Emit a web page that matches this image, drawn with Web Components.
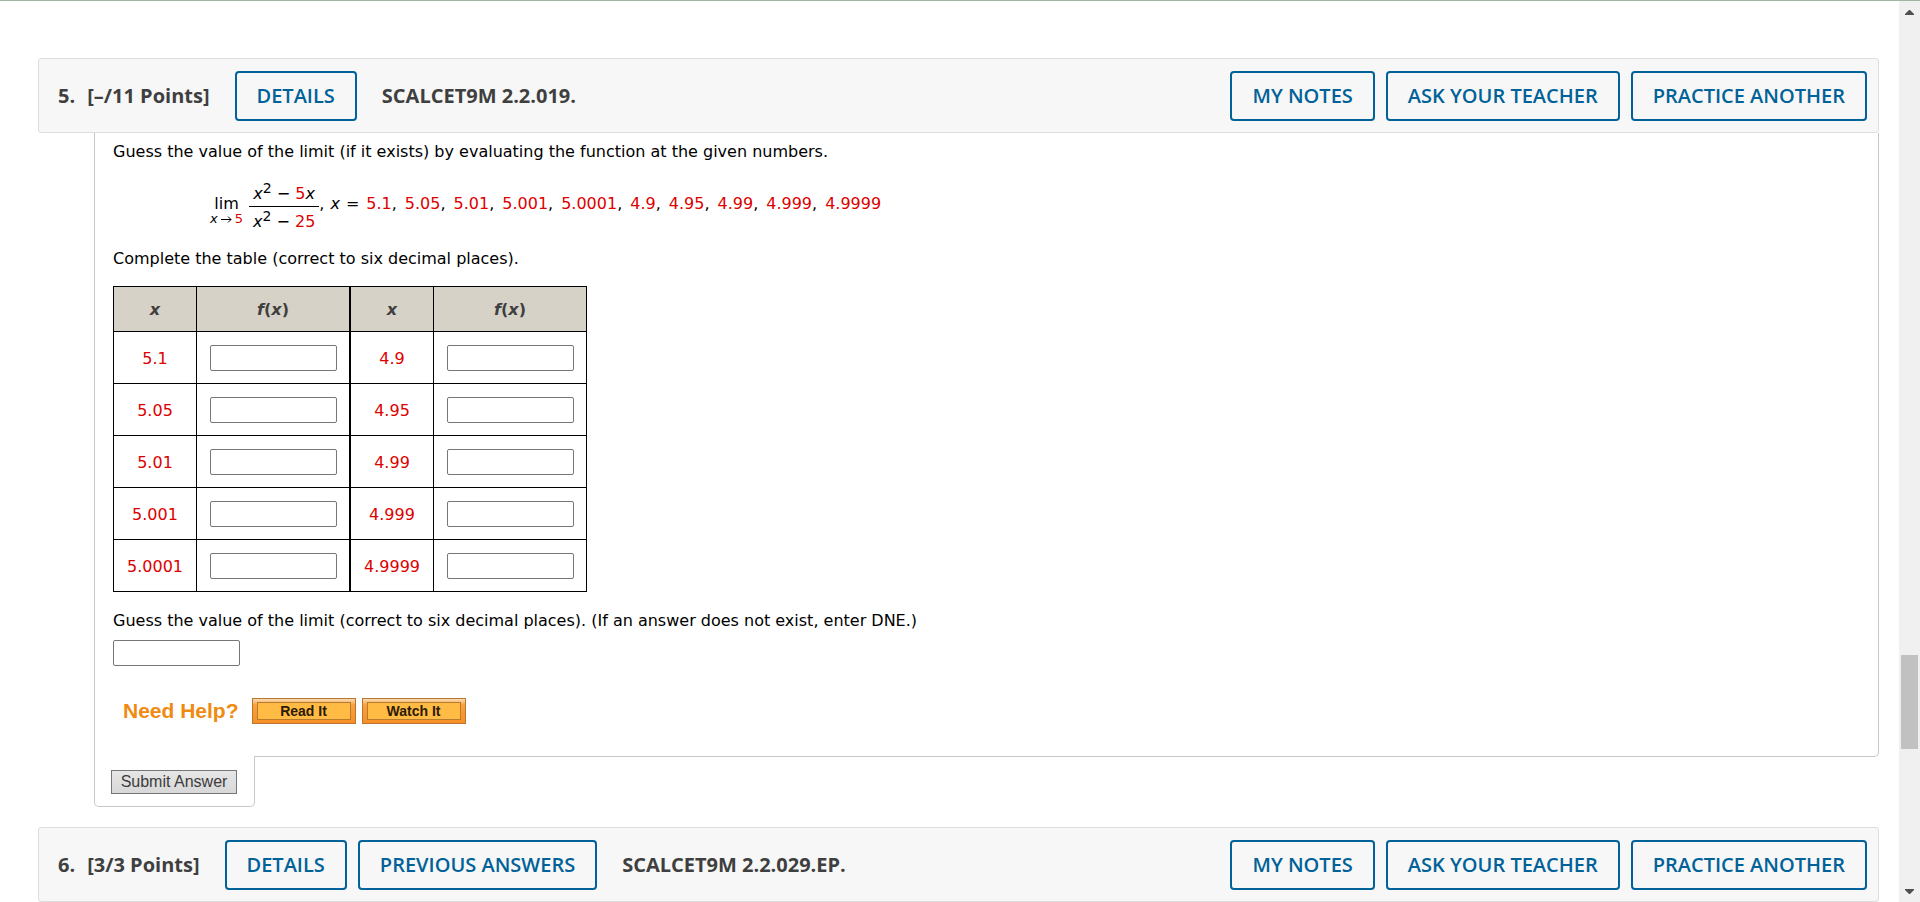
<!DOCTYPE html>
<html lang="en">
<head>
<meta charset="utf-8">
<title>Homework: Limits</title>
<style>
  html, body { margin: 0; height: 100%; }
  body { font-family: "DejaVu Sans", Verdana, sans-serif; font-size: 16px; line-height: 24px; color: #000; background: #fff; overflow: hidden; }
</style>
</head>
<body>
<assignment-page>
  <question-bar number="5." points="[–/11 Points]" name="SCALCET9M 2.2.019.">
    <outline-button slot="actions">DETAILS</outline-button>
  </question-bar>
  <question-body>
    <p>Guess the value of the limit (if it exists) by evaluating the function at the given numbers.</p>
    <limit-expression values="5.1 5.05 5.01 5.001 5.0001 4.9 4.95 4.99 4.999 4.9999"></limit-expression>
    <p>Complete the table (correct to six decimal places).</p>
    <value-table left="5.1 5.05 5.01 5.001 5.0001" right="4.9 4.95 4.99 4.999 4.9999"></value-table>
    <limit-answer>Guess the value of the limit (correct to six decimal places). (If an answer does not exist, enter DNE.)</limit-answer>
    <need-help></need-help>
  </question-body>
  <question-bar number="6." points="[3/3 Points]" name="SCALCET9M 2.2.029.EP.">
    <outline-button slot="actions">DETAILS</outline-button>
    <outline-button slot="actions">PREVIOUS ANSWERS</outline-button>
  </question-bar>
</assignment-page>

<script>
const define = (name, render) => customElements.define(name, class extends HTMLElement {
  connectedCallback() {
    if (this.shadowRoot) return;
    this.attachShadow({ mode: 'open' }).innerHTML = render(this);
  }
});

define('assignment-page', () => `
  <style>
    :host { display: grid; grid-template-columns: 1fr 21px; height: 100vh; box-sizing: border-box; border-top: 1px solid #a0b5a0; overflow: hidden; }
    main { padding: 57px 20px 0 38px; min-width: 0; }
  </style>
  <main><slot></slot></main>
  <page-scrollbar></page-scrollbar>`);

define('page-scrollbar', () => `
  <style>
    :host { display: grid; grid-template-rows: 20px 634fr 94px 133fr 20px; background: #f0f0f0; justify-items: center; }
    .thumb { grid-row: 3; width: 17px; background: #c1c1c1; }
    svg { display: block; width: 21px; height: 20px; fill: #505050; }
    .down { grid-row: 5; }
  </style>
  <svg viewBox="0 0 21 20" aria-hidden="true"><path d="M6 14h9v-1l-4-4h-1l-4 4z"/></svg>
  <div class="thumb"></div>
  <svg class="down" viewBox="0 0 21 20" aria-hidden="true"><path d="M6 7h9v1l-4 4h-1l-4-4z"/></svg>`);

define('outline-button', () => `
  <style>
    :host { display: block; }
    button { display: block; box-sizing: border-box; height: 50px; padding: 0 20px; border: 2px solid #006298; border-radius: 4px; background: transparent; color: #006298; font: 600 20px/24px "Open Sans", sans-serif; white-space: nowrap; }
  </style>
  <button type="button"><slot></slot></button>`);

define('question-bar', el => `
  <style>
    :host { display: flex; align-items: center; box-sizing: border-box; min-height: 75px; padding: 0 11px 0 19px; border: 1px solid #dedede; border-radius: 3px; background: #f7f7f7; color: #3f3f3f; font: 700 20px/24px "Open Sans", sans-serif; white-space: nowrap; }
    h2 { display: flex; gap: 12px; margin: 0; font: inherit; }
    .group { display: flex; gap: 11px; }
    .own { margin: 0 25px; }
    .common { margin-left: auto; }
  </style>
  <h2><span>${el.getAttribute('number')}</span><span>${el.getAttribute('points')}</span></h2>
  <div class="group own"><slot name="actions"></slot></div>
  <span>${el.getAttribute('name')}</span>
  <div class="group common">
    <outline-button>MY NOTES</outline-button>
    <outline-button>ASK YOUR TEACHER</outline-button>
    <outline-button>PRACTICE ANOTHER</outline-button>
  </div>`);

define('question-body', () => `
  <style>
    :host { display: block; margin: 0 0 20px 56px; }
    section { box-sizing: border-box; padding: 7px 18px 32px; border: solid #c8c8c8; border-width: 0 1px 1px; border-radius: 0 0 5px 0; }
    ::slotted(p) { margin: 0; }
    .tab { box-sizing: border-box; width: 161px; margin-top: -1px; padding: 14px 16px 12px; border: solid #c8c8c8; border-width: 0 1px 1px; border-radius: 0 0 5px 5px; background: #fff; position: relative; }
    button { display: block; box-sizing: border-box; width: 126px; height: 24px; padding: 0; border: 1px solid #767676; background: linear-gradient(#e6e6e6, #d8d8d8); color: #3c3c3c; font: 16px/22px "Liberation Sans", Arial, sans-serif; white-space: nowrap; }
  </style>
  <section><slot></slot></section>
  <div class="tab"><button type="submit">Submit Answer</button></div>`);

define('limit-expression', el => `
  <style>
    :host { display: flex; align-items: center; margin: 17px 0 16px 97px; height: 50px; white-space: nowrap; }
    .red { color: #d00; }
    .lim { display: grid; justify-items: center; margin-right: 6px; padding-top: 10px; }
    .under { display: flex; align-items: center; gap: 2px; font-size: 13px; line-height: 14px; }
    .lim b { font-weight: 400; line-height: 16px; }
    svg { width: 13px; height: 9px; fill: none; stroke: #000; }
    .frac { display: grid; padding-top: 3px; text-align: center; }
    .frac > span { padding: 0 4px; line-height: 24px; }
    .frac > span:first-child { border-bottom: 1px solid #000; }
    .frac > span:last-child { padding-top: 3px; }
    sup { font-size: 14px; line-height: 1px; vertical-align: 6px; }
    .lead, .list { display: flex; padding-bottom: 4px; }
    .lead { gap: 6px; margin-right: 7px; }
    .list { gap: 8px; }
  </style>
  <span class="lim"><b>lim</b><span class="under"><i>x</i><svg viewBox="0 0 13 9" role="img" aria-label="approaches"><path d="M1 4.500h10M8 1.500l3 3-3 3"/></svg><span class="red">5</span></span></span>
  <span class="frac"><span><i>x</i><sup>2</sup> − <span class="red">5</span><i>x</i></span><span><i>x</i><sup>2</sup> − <span class="red">25</span></span></span>
  <span class="lead"><span>,</span><i>x</i><span>=</span></span>
  <span class="list">${el.getAttribute('values').split(' ').map((v, i, all) => `<span><span class="red">${v}</span>${i < all.length - 1 ? ',' : ''}</span>`).join('')}</span>`);

define('value-table', el => {
  const right = el.getAttribute('right').split(' ');
  const cell = v => `<td>${v}</td><td><input type="text" aria-label="f(${v})"></td>`;
  return `
  <style>
    :host { display: block; margin: 15px 0 17px; }
    table { border-spacing: 0; border: solid #000; border-width: 1px 0 0 1px; table-layout: fixed; width: 474px; text-align: center; }
    th, td { box-sizing: border-box; padding: 0; border: solid #000; border-width: 0 1px 1px 0; }
    th { height: 45px; background: #d6d2c7; color: #3f3f3f; font-weight: 700; width: 153px; }
    th:nth-child(odd) { width: 83px; }
    th:nth-child(2) { width: 154px; }
    tr > :nth-child(2) { border-right-width: 2px; }
    td { height: 52px; color: #d00; }
    th, td:nth-child(odd) { padding-top: 2px; }
    input { display: block; box-sizing: border-box; width: 127px; height: 26px; margin: 0 auto; border: 1px solid #767676; border-radius: 2px; font: inherit; }
  </style>
  <table>
    <thead><tr>${'<th scope="col"><i>x</i></th><th scope="col"><i>f</i>(<i>x</i>)</th>'.repeat(2)}</tr></thead>
    <tbody>${el.getAttribute('left').split(' ').map((v, i) => `<tr>${cell(v)}${cell(right[i])}</tr>`).join('')}</tbody>
  </table>`;
});

define('limit-answer', () => `
  <style>
    :host { display: block; }
    label { display: block; }
    input { display: block; box-sizing: border-box; width: 127px; height: 26px; margin-top: 7px; border: 1px solid #767676; border-radius: 2px; font: inherit; }
  </style>
  <label for="limit"><slot></slot></label>
  <input id="limit" type="text">`);

define('need-help', () => `
  <style>
    :host { display: flex; align-items: center; gap: 6px; margin: 32px 0 0 10px; font-family: "Liberation Sans", Arial, sans-serif; font-weight: 700; white-space: nowrap; }
    strong { margin-right: 7px; font-size: 21px; color: #f08a10; }
  </style>
  <strong>Need Help?</strong>
  <help-button>Read It</help-button>
  <help-button>Watch It</help-button>`);

define('help-button', () => `
  <style>
    :host { display: block; }
    button { display: block; box-sizing: border-box; width: 104px; height: 26px; padding: 3px 4px; border: 1px solid #b8752c; background: linear-gradient(#fbdcb8, #f9a040 25%, #f78f24); font: 700 14px/16px "Liberation Sans", Arial, sans-serif; color: #2b1a05; }
    span { display: block; border: 1px solid #b87a2c; background: #ffbb44; }
  </style>
  <button type="button"><span><slot></slot></span></button>`);
</script>
</body>
</html>
